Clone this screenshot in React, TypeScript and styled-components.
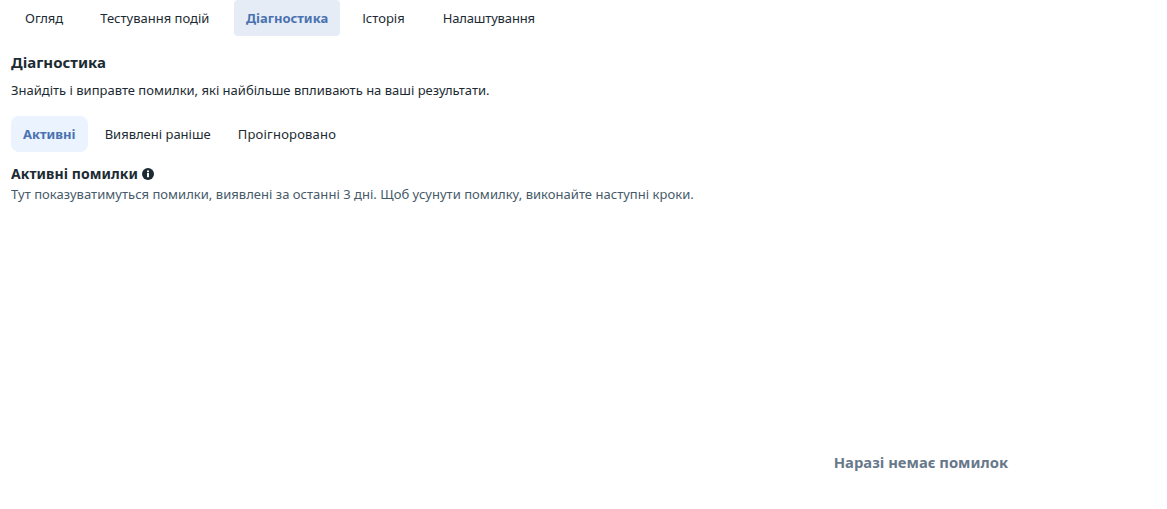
import React from "react";
import styled, { createGlobalStyle } from "styled-components";

const Global = createGlobalStyle`
  html, body { margin: 0; padding: 0; background: #fff; }
  body { font-family: "Noto Sans", "Open Sans", sans-serif; color: #1c2b33; }
`;

const Page = styled.div`
  width: 1167px;
  height: 509px;
  overflow: hidden;
  display: flex;
  flex-direction: column;
  padding: 0 11px;
  box-sizing: border-box;
`;

const TopTabs = styled.nav`
  display: flex;
  gap: 13px;
  margin-left: 2px;
`;

const TopTab = styled.div<{ $active?: boolean }>`
  height: 36px;
  padding: ${(p) => (p.$active ? "0 12px 0 11.5px" : "0 12px")};
  display: flex;
  align-items: center;
  border-radius: 4px;
  font-size: 13px;
  font-weight: ${(p) => (p.$active ? 700 : 400)};
  color: ${(p) => (p.$active ? "#4a72b0" : "#1c2b33")};
  background: ${(p) => (p.$active ? "#e5ecf6" : "transparent")};
  margin: ${(p) => (p.$active ? "0 -3px 0 0" : "0")};
  &:last-child {
    margin-left: 1px;
    letter-spacing: -0.15px;
  }
`;

const Title = styled.h1`
  margin: 16px 0 0;
  font-size: 15px;
  line-height: 20px;
  font-weight: 700;
  color: #1c2b33;
`;

const Subtitle = styled.p`
  margin: 9px 0 0;
  font-size: 13px;
  line-height: 18px;
  color: #1c2b33;
`;

const SubTabs = styled.nav`
  display: flex;
  gap: 5px;
  margin-top: 17px;
`;

const SubTab = styled.div<{ $active?: boolean }>`
  height: 36px;
  padding: 0 12px;
  display: flex;
  align-items: center;
  border-radius: 8px;
  font-size: 13px;
  font-weight: ${(p) => (p.$active ? 700 : 400)};
  color: ${(p) => (p.$active ? "#4a72b0" : "#1c2b33")};
  background: ${(p) => (p.$active ? "#ebf3ff" : "transparent")};
  &:last-child {
    margin-left: -2px;
    letter-spacing: 0.2px;
  }
`;

const SectionTitle = styled.h2`
  margin: 13px 0 0;
  display: flex;
  align-items: center;
  gap: 4px;
  font-size: 14px;
  line-height: 18px;
  font-weight: 700;
  letter-spacing: 0.06px;
  color: #1c2b33;
`;

const Hint = styled.p`
  margin: 2px 0 0;
  font-size: 13px;
  line-height: 18px;
  letter-spacing: 0.03px;
  color: #465a69;
`;

const Empty = styled.div`
  margin-top: 249px;
  display: flex;
  justify-content: flex-end;
  padding-right: 148px;
  font-size: 14.8px;
  line-height: 20px;
  font-weight: 700;
  color: #67788a;
`;

const InfoIcon = () => (
  <svg width="12" height="12" viewBox="0 0 12 12" aria-hidden="true">
    <circle cx="6" cy="6" r="6" fill="#1c2b33" />
    <rect x="5" y="5" width="2" height="4.2" fill="#fff" />
    <rect x="5" y="2.5" width="2" height="1.7" fill="#fff" />
  </svg>
);

export default function App() {
  return (
    <>
      <Global />
      <Page>
        <TopTabs>
          <TopTab>Огляд</TopTab>
          <TopTab>Тестування подій</TopTab>
          <TopTab $active>Діагностика</TopTab>
          <TopTab>Історія</TopTab>
          <TopTab>Налаштування</TopTab>
        </TopTabs>
        <Title>Діагностика</Title>
        <Subtitle>Знайдіть і виправте помилки, які найбільше впливають на ваші результати.</Subtitle>
        <SubTabs>
          <SubTab $active>Активні</SubTab>
          <SubTab>Виявлені раніше</SubTab>
          <SubTab>Проігноровано</SubTab>
        </SubTabs>
        <SectionTitle>
          Активні помилки <InfoIcon />
        </SectionTitle>
        <Hint>Тут показуватимуться помилки, виявлені за останні 3 дні. Щоб усунути помилку, виконайте наступні кроки.</Hint>
        <Empty>Наразі немає помилок</Empty>
      </Page>
    </>
  );
}
